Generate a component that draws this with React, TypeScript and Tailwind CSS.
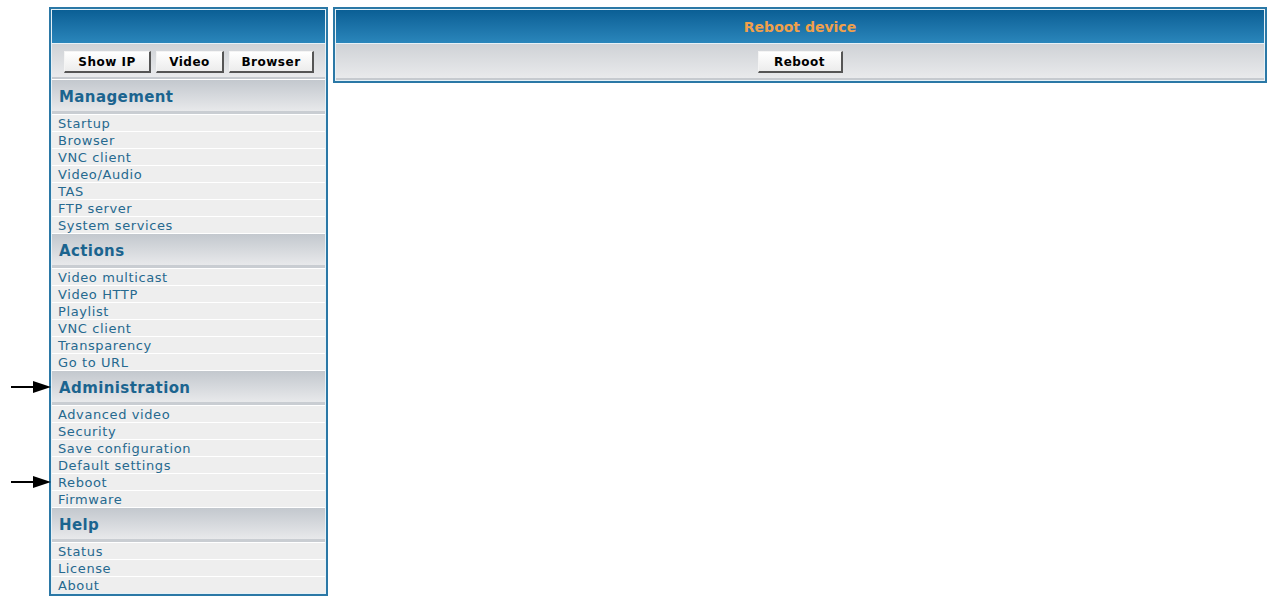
import React from "react";

const sections = [
  {
    title: "Management",
    items: ["Startup", "Browser", "VNC client", "Video/Audio", "TAS", "FTP server", "System services"],
  },
  {
    title: "Actions",
    items: ["Video multicast", "Video HTTP", "Playlist", "VNC client", "Transparency", "Go to URL"],
  },
  {
    title: "Administration",
    arrow: true,
    items: ["Advanced video", "Security", "Save configuration", "Default settings", "Reboot", "Firmware"],
  },
  {
    title: "Help",
    items: ["Status", "License", "About"],
  },
];

function Arrow() {
  return (
    <svg width="40" height="14" viewBox="0 0 40 14" className="absolute left-[-41px] top-1/2 -translate-y-1/2">
      <line x1="0" y1="7" x2="24" y2="7" stroke="#000" strokeWidth="2" />
      <polygon points="22,1 40,7 22,13" fill="#000" />
    </svg>
  );
}

function Btn({ label, w }: { label: string; w: string }) {
  return (
    <button
      className={`${w} h-[22px] bg-gradient-to-b from-white to-[#ececec] border border-t-[#f4f4f4] border-l-[#f4f4f4] border-r-[#555] border-b-[#555] border-r-2 border-b-2 text-[12px] font-bold tracking-[0.5px] text-black leading-none`}
    >
      {label}
    </button>
  );
}

export default function App() {
  return (
    <div className="flex gap-[5px] pt-[7px] pl-[49px] pr-[6px] bg-white min-h-[601px] font-['DejaVu_Sans',Verdana,sans-serif]">
      {/* left menu */}
      <div className="w-[279px] shrink-0 self-start border-2 border-[#2b78a6] p-px bg-[#e6f1f7]">
        <div className="h-[33px] bg-gradient-to-b from-[#0a5f95] to-[#2a86bb]" />
        <div className="mt-px h-[35px] flex items-start pt-[7px] gap-[5px] pl-[12px] bg-gradient-to-b from-[#cfd2d6] to-[#e9eaec] border-b-2 border-[#c6cacf]">
          <Btn label="Show IP" w="w-[87px]" />
          <Btn label="Video" w="w-[68px]" />
          <Btn label="Browser" w="w-[85px]" />
        </div>
        {sections.map((s) => (
          <div key={s.title}>
            <div className="relative h-[35px] flex items-center pl-[7px] pt-[4px] bg-gradient-to-b from-[#c3c8ce] to-[#e8e9eb] border-b-[3px] border-[#c9cdd2] border-t border-t-white">
              {s.arrow && <Arrow />}
              <span className="text-[15px] font-bold tracking-[0.4px] text-[#1b648f]">{s.title}</span>
            </div>
            {s.items.map((it) => (
              <div
                key={it}
                className="relative h-[17px] flex items-center pl-[6px] bg-[#eeeeee] border-t border-white text-[13px] tracking-[0.6px] text-[#26698f] leading-none"
              >
                {it === "Reboot" && <Arrow />}
                {it}
              </div>
            ))}
          </div>
        ))}
      </div>

      {/* main */}
      <div className="flex-1 self-start border-2 border-[#2b78a6] p-px bg-[#e6f1f7]">
        <div className="h-[33px] flex items-center justify-center pt-[2px] bg-gradient-to-b from-[#0a5f95] to-[#2a86bb] text-[14px] font-bold text-[#f0a04b]">
          Reboot device
        </div>
        <div className="mt-px h-[36px] flex items-start pt-[7px] justify-center bg-gradient-to-b from-[#cfd2d6] to-[#e9eaec] border-b-2 border-[#c6cacf]">
          <Btn label="Reboot" w="w-[85px]" />
        </div>
      </div>
    </div>
  );
}
